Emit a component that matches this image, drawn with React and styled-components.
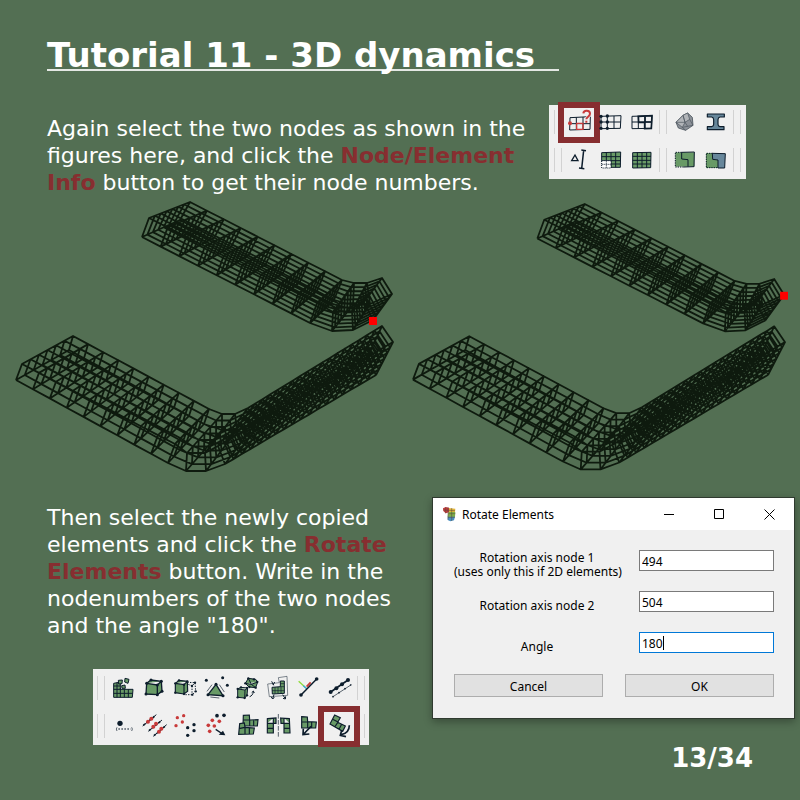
import React from "react";
import styled, { createGlobalStyle, css } from "styled-components";

const GlobalStyle = createGlobalStyle`
  *, *::before, *::after { box-sizing: border-box; }
  body { margin: 0; background: #536f53; }
  h1, p { margin: 0; }
`;

const Page = styled.main`
  display: flex;
  flex-direction: column;
  min-height: 100vh;
  padding-top: 39px;
  background: #536f53;
  color: #ffffff;
  font-family: "DejaVu Sans", sans-serif;
`;

const Title = styled.h1`
  align-self: flex-start;
  margin-left: 47px;
  padding-right: 24px;
  font-size: 34px;
  line-height: 32px;
  font-weight: bold;
  white-space: nowrap;
  background: linear-gradient(#e4e8e4, #e4e8e4) left bottom / 100% 2px no-repeat;
`;

const Intro = styled.section`
  display: flex;
  align-items: flex-start;
  justify-content: space-between;
  padding: 34px 54px 0 47px;
`;

const Text = styled.p`
  max-width: ${(p) => p.$width}px;
  padding-top: ${(p) => p.$top}px;
  font-size: 22px;
  line-height: 27px;
`;

const Accent = styled.strong`
  color: #872e30;
`;

const Figures = styled.section`
  display: flex;
  align-items: center;
  gap: 15px;
  padding: 4px 12px 0 14px;
`;

const Figure = styled.svg`
  flex: ${(p) => p.$grow} 1 0;
  min-width: 0;
  display: block;
  overflow: visible;
`;

const Lower = styled.section`
  display: flex;
  align-items: flex-start;
  justify-content: space-between;
  padding: 23px 5px 0 47px;
`;

const Column = styled.div`
  display: flex;
  flex-direction: column;
  align-items: center;
  gap: 30px;
`;

const Side = styled.div`
  display: flex;
  flex-direction: column;
  width: 363px;
`;

const PageNumber = styled.p`
  align-self: flex-end;
  margin-top: 24px;
  padding-right: 42px;
  font-size: 26px;
  line-height: 30px;
  font-weight: bold;
`;

/* ---------- toolbars ---------- */

const Toolbar = styled.div`
  display: flex;
  flex-direction: column;
  gap: 4px;
  flex: none;
  padding: ${(p) => (p.$compact ? "0 5px 2px" : "2px 4px")};
  background: #f0f0f0;
`;

const ToolRow = styled.div`
  display: flex;
  align-items: center;
  gap: 2px;
  height: 34px;
`;

const Grip = styled.span`
  width: 8px;
  height: 24px;
  border: solid #d2d2d2;
  border-width: 0 1px;
`;

const ToolGroup = styled.div`
  display: flex;
`;

const ToolButton = styled.button`
  position: relative;
  display: grid;
  place-items: center;
  width: 31px;
  height: 34px;
  padding: 0;
  border: 0;
  background: none;
  ${(p) =>
    p.$marked &&
    css`
      &::after {
        content: "";
        position: absolute;
        inset: -3px -5px -4px -6px;
        border: 6px solid #872e30;
      }
    `}
`;

const Glyph = styled.svg`
  display: block;
  width: 24px;
  height: 24px;
  overflow: visible;
`;

const NAVY = "#0d1d2c";
const GREEN = "#689a66";
const RED = "#c83a3a";
const BLUE = "#67879b";

function Dots({ at, r = 5, fill = NAVY }) {
  return at.map(([x, y]) => <circle key={`${x}-${y}`} cx={x} cy={y} r={r} fill={fill} />);
}

const line = { fill: "none", stroke: NAVY, strokeWidth: 3 };

const icons = {
  info: (
    <>
      <path {...line} d="M6 23 67 20 66 58 5 60ZM25 22V59M45 21V58M6 41H66" />
      <path fill="none" stroke={RED} strokeWidth="4" d="M26 40H45V58H26Z" />
      <circle cx="6" cy="40" r="6" fill={RED} />
      <path fill="none" stroke="#f0f0f0" strokeWidth="10" d="M46 10C47 -1 66 0 66 11 66 20 55 20 55 29" />
      <path fill="none" stroke={RED} strokeWidth="6" d="M46 10C47 -1 66 0 66 11 66 20 55 20 55 28M55 32V38" />
    </>
  ),
  nodes: (
    <>
      <path {...line} d="M6 19 66 17 64 55 6 56ZM25 18V56M45 18V56M6 36H65" />
      <Dots at={[[6, 19], [25, 18], [6, 36], [25, 36], [6, 55], [25, 55]]} r={5} />
    </>
  ),
  elements: (
    <>
      <path {...line} d="M6 19 66 17 64 55 6 56ZM25 18V56M45 18V56M6 36H65" />
      <path {...line} strokeWidth="5" d="M25 19 66 17 64 55 44 56V37H26ZM45 18V36H65" />
    </>
  ),
  rock: (
    <>
      <path fill="#8d9299" stroke="#4b545d" strokeWidth="2.5" strokeLinejoin="round" d="M30 16 44 9 58 22 60 46 38 61 16 54 9 37Z" />
      <path fill="#b2b5b9" stroke="#4b545d" strokeWidth="2" d="M30 16 36 37 9 37ZM44 9 50 28 36 37 30 16ZM36 37 28 52 9 37" />
      <path fill="none" stroke="#4b545d" strokeWidth="2" d="M50 28 60 46 28 52 38 61M36 37 44 49" />
    </>
  ),
  beam: (
    <path fill={BLUE} stroke={NAVY} strokeWidth="3.5" strokeLinejoin="round" d="M10 12H61V21H48Q42 22 42 29V43Q42 49 48 50H60V59H10V50H23Q29 49 29 43V29Q29 22 23 21H10Z" />
  ),
  delta: (
    <>
      <path {...line} strokeWidth="4" d="M21 21 11 38H30Z" />
      <path {...line} strokeWidth="4.5" d="M47 7 41 62M40 6 54 8M33 60 49 62" />
    </>
  ),
  partMesh: (
    <>
      <path fill={GREEN} stroke={NAVY} strokeWidth="3" d="M8 14 65 12 64 58H36V38H8Z" />
      <path {...line} d="M8 26H65M22 13V38M36 13V38M50 12V58M8 38H65M36 48H64" />
      <path fill="#ffffff" stroke={NAVY} strokeWidth="3" strokeDasharray="3 3" d="M8 38H36V60H8ZM22 38V60M8 49H36" />
    </>
  ),
  fullMesh: (
    <>
      <path fill={GREEN} stroke={NAVY} strokeWidth="3" d="M8 14 63 13 62 59 8 60Z" />
      <path {...line} d="M8 25H63M8 37H63M8 48H63M22 13V60M36 13V60M50 13V60" />
    </>
  ),
  regionA: (
    <>
      <path fill={GREEN} d="M7 13H64V56H7Z" />
      <path {...line} d="M26 13 64 12 63 56 31 57M26 13V33L45 35V56" />
      <path {...line} strokeDasharray="4 3" d="M26 13H7V57H31" />
    </>
  ),
  regionB: (
    <>
      <path fill={GREEN} d="M6 15H26V34H42V60H6Z" />
      <path fill={BLUE} stroke={NAVY} strokeWidth="3" d="M25 16 64 17 62 60H42V36L26 34Z" />
      <path {...line} strokeDasharray="4 3" d="M26 16H7V59H42" />
    </>
  ),
  build: (
    <>
      <path fill={GREEN} stroke={NAVY} strokeWidth="3" d="M8 22 28 18V40H66L64 64H8Z" />
      <path {...line} d="M8 40H28M8 52H65M18 20V64M28 36V64M40 40V64M52 40V64M8 30H28" />
      <path fill={GREEN} stroke={NAVY} strokeWidth="3" d="M22 13 34 12 33 23 23 24ZM42 7 54 10 51 22 41 18ZM32 29 42 27 43 37 33 37Z" />
    </>
  ),
  cube: (
    <>
      <path fill={GREEN} stroke={NAVY} strokeWidth="4" d="M14 22 27 12 58 16 60 46 46 56 12 54ZM14 22 46 27 58 16M46 27V56" />
      <Dots at={[[14, 22], [27, 12], [58, 16], [60, 46], [46, 56], [12, 54], [46, 27]]} r={4.5} />
    </>
  ),
  cubeCopy: (
    <>
      <path fill={GREEN} stroke={NAVY} strokeWidth="3.5" d="M7 22 18 13 43 16 44 46 33 54 7 50ZM7 22 33 26 43 16M33 26V54" />
      <path {...line} strokeDasharray="4 4" d="M43 19 66 20 68 46 58 56H36M46 25 57 30 66 20M57 30V56" />
      <Dots at={[[7, 22], [18, 13], [43, 16], [33, 54], [7, 50], [33, 26], [66, 20], [68, 46], [58, 56], [57, 30]]} r={3.5} />
    </>
  ),
  triangle: (
    <>
      <path fill={GREEN} stroke={NAVY} strokeWidth="4" d="M36 25 57 59 12 56Z" />
      <path {...line} strokeWidth="2" d="M24 26 9 46M46 26 61 48M19 63 46 66" />
      <Dots at={[[36, 25], [57, 59], [12, 56], [7, 13], [56, 5], [70, 28]]} r={4.5} />
    </>
  ),
  cubes: (
    <>
      <path fill={GREEN} stroke={NAVY} strokeWidth="3" d="M8 39 18 34 38 36 36 58 29 66 8 64ZM8 39 30 42 38 36M30 42 29 66" />
      <path fill={GREEN} stroke={NAVY} strokeWidth="3" d="M40 7 62 10 68 18 62 35 42 33 31 22ZM31 22 49 25 68 18M49 25 62 35M40 7 49 25" />
      <Dots at={[[8, 39], [18, 34], [36, 36], [36, 58], [29, 66], [8, 64], [40, 7], [57, 10], [67, 18], [62, 35], [43, 33], [31, 22]]} r={3.5} />
      <path {...line} d="M44 62C50 60 54 55 55 47M50 50 55 45 58 51" />
    </>
  ),
  stretch: (
    <>
      <path fill={GREEN} stroke={NAVY} strokeWidth="3" d="M18 34 43 32V15H55V52L19 54Z" />
      <path {...line} strokeWidth="2" d="M18 44H55M43 32H55M43 23H55M27 34V53M36 33V53M45 32V53" />
      <path {...line} strokeWidth="1.5" d="M5 24 40 20 37 5 63 1 65 58 10 62Z" />
      <path {...line} d="M17 16 23 28M26 18 21 27M24 56 20 68M15 62 20 69 25 64M50 56 58 68M51 67 58 69 59 61" />
    </>
  ),
  axes: (
    <>
      <path fill="none" stroke="#8edb3a" strokeWidth="4" d="M5 16 27 36" />
      <path fill="none" stroke="#39a9e0" strokeWidth="4" d="M19 29 29 38" />
      <path fill="none" stroke={RED} strokeWidth="6" d="M29 32 41 19" />
      <path {...line} strokeWidth="4.5" d="M12 57 59 9" />
      <Dots at={[[12, 57], [59, 9]]} r={5.5} />
    </>
  ),
  rod: (
    <>
      <path {...line} strokeWidth="5" d="M8 48 60 12" />
      <Dots at={[[8, 48], [25, 37], [42, 25], [60, 12]]} r={6} />
      <path {...line} strokeWidth="2" d="M15 62 70 26" />
      <Dots at={[[15, 62], [33, 50], [51, 38], [68, 27]]} r={2.5} />
    </>
  ),
  point: (
    <>
      <circle cx="27" cy="28" r="8" fill={NAVY} />
      <path {...line} strokeWidth="2" d="M18 40Q14 45 18 51M62 40Q66 45 62 51" />
      <path {...line} strokeWidth="3" strokeDasharray="5 4" d="M22 45H59" />
    </>
  ),
  rods: (
    <>
      <path {...line} strokeWidth="3" d="M2 36 43 2M19 52 60 18M34 67 74 32" />
      <path {...line} strokeWidth="5" strokeDasharray="7 5" d="M4 34 41 4M21 50 58 20M36 65 72 34" />
      <Dots at={[[18, 23], [28, 14], [34, 38], [42, 29], [51, 53], [58, 44]]} r={6} fill={RED} />
    </>
  ),
  dotsRed: (
    <>
      <Dots at={[[13, 11], [32, 5], [28, 24], [9, 35]]} r={5} fill={RED} />
      <Dots at={[[44, 41], [63, 32], [63, 50], [44, 64]]} r={5} />
    </>
  ),
  dotsArrow: (
    <>
      <Dots at={[[25, 19], [46, 22], [13, 34], [31, 36], [17, 52]]} r={5.5} fill={RED} />
      <Dots at={[[39, 5], [60, 4]]} r={5.5} />
      <path {...line} strokeWidth="4" d="M35 46 56 60" />
      <path fill={NAVY} d="M64 64 44 62 57 50Z" />
    </>
  ),
  stack: (
    <>
      <path fill={GREEN} stroke={NAVY} strokeWidth="3.5" d="M25 4 43 3 44 18 69 17 67 36H24ZM26 18H44V36M56 18V36" />
      <path fill={GREEN} stroke={NAVY} strokeWidth="3.5" d="M14 29 28 27 30 40 58 42 55 60 11 61ZM12 44 30 40V60M43 41V60" />
    </>
  ),
  mirror: (
    <>
      <path fill={GREEN} stroke={NAVY} strokeWidth="3.5" d="M4 14 30 12V28H22V57H4ZM4 28H22V12M4 43H22" />
      <path fill={GREEN} stroke={NAVY} strokeWidth="3.5" d="M44 12 70 14 72 57H54V28H45ZM54 12V28H71M54 43H71" />
      <path {...line} strokeWidth="2" strokeDasharray="14 4" d="M37 0V68" />
    </>
  ),
  move: (
    <>
      <path fill={GREEN} stroke={NAVY} strokeWidth="3.5" d="M14 8 31 9 32 23 58 24 56 42H14ZM14 24H32V42M44 24V42" />
      <path {...line} strokeWidth="5" d="M42 37 20 60M19 44 18 62 37 60" />
    </>
  ),
  rotate: (
    <>
      <path fill={GREEN} stroke={NAVY} strokeWidth="3.5" d="M20 3 37 11 29 25 52 36 44 52 6 30ZM14 16 30 24 21 38M41 31 33 46" />
      <path {...line} strokeWidth="5" d="M64 34C64 49 55 59 40 62M41 49 37 64 54 68" />
    </>
  ),
};

function Tool({ name, label, marked }) {
  return (
    <ToolButton type="button" aria-label={label} $marked={marked}>
      <Glyph viewBox="0 0 72 72" aria-hidden="true">
        {icons[name]}
      </Glyph>
    </ToolButton>
  );
}

function Tools({ items, marked }) {
  return (
    <ToolGroup>
      {items.map(([name, label]) => (
        <Tool key={name} name={name} label={label} marked={name === marked} />
      ))}
    </ToolGroup>
  );
}

const infoRows = [
  [
    [["info", "Node/Element Info"], ["nodes", "Select nodes"], ["elements", "Select elements"]],
    [["rock", "Material"], ["beam", "Section"]],
  ],
  [
    [["delta", "Measure"], ["partMesh", "Show part"], ["fullMesh", "Show all"]],
    [["regionA", "Element set"], ["regionB", "Assign section"]],
  ],
];

const editRows = [
  [
    ["build", "Create mesh"], ["cube", "Create element"], ["cubeCopy", "Extrude elements"], ["triangle", "Create triangle"],
    ["cubes", "Convert elements"], ["stretch", "Scale elements"], ["axes", "Orientation"], ["rod", "Beam elements"],
  ],
  [
    ["point", "Create node"], ["rods", "Fuse nodes"], ["dotsRed", "Copy nodes"], ["dotsArrow", "Move nodes"],
    ["stack", "Copy elements"], ["mirror", "Mirror elements"], ["move", "Move elements"], ["rotate", "Rotate Elements"],
  ],
];

/* ---------- wireframe solids ---------- */

const mix = (a, b, t) => [a[0] + (b[0] - a[0]) * t, a[1] + (b[1] - a[1]) * t];

// Expands corner points into evenly spaced stations; counts[i] cells lie between corner i and i + 1.
function stations(corners, counts) {
  const out = [corners[0]];
  counts.forEach((n, i) => {
    for (let k = 1; k <= n; k += 1) out.push(mix(corners[i], corners[i + 1], k / n));
  });
  return out;
}

function wirePath({ counts, across, lowFront, lowBack, highFront, highBack }) {
  const [a, b, c, d] = [lowFront, lowBack, highBack, highFront].map((p) => stations(p, counts));
  const toPath = (pts) => "M" + pts.map(([x, y]) => `${x.toFixed(1)} ${y.toFixed(1)}`).join("L");
  const parts = [];
  for (let j = 0; j <= across; j += 1) {
    const t = j / across;
    parts.push(toPath(a.map((p, i) => mix(p, d[i], t))));
    parts.push(toPath(b.map((p, i) => mix(p, c[i], t))));
  }
  a.forEach((p, i) => {
    parts.push(toPath([p, b[i], c[i], d[i], p]));
    for (let j = 1; j < across; j += 1) {
      const t = j / across;
      parts.push(toPath([mix(p, d[i], t), mix(b[i], c[i], t)]));
    }
  });
  return parts.join("");
}

const longArm = wirePath({
  counts: [9, 1, 1, 1, 18],
  across: 6,
  lowFront: [[16, 380], [168, 463], [186, 471], [206, 471], [225, 464], [376, 375]],
  lowBack: [[22, 364], [175, 444], [187, 453], [205, 453], [218, 446], [367, 358]],
  highBack: [[73, 336], [209, 409], [222, 414], [235, 414], [248, 408], [382, 326]],
  highFront: [[69, 350], [204, 424], [222, 430], [237, 430], [257, 422], [393, 342]],
});

const shortArm = wirePath({
  counts: [9, 1, 1, 1],
  across: 7,
  lowFront: [[142, 237], [310, 323], [332, 331], [353, 330], [373, 320]],
  lowBack: [[149, 218], [317, 303], [333, 312], [352, 311], [364, 302]],
  highBack: [[190, 202], [342, 280], [354, 283], [367, 283], [382, 278]],
  highFront: [[180, 220], [334, 300], [353, 305], [370, 304], [392, 294]],
});

function Solid({ grow, node, label }) {
  return (
    <Figure $grow={grow} viewBox="14 200 382 274" role="img" aria-label={label}>
      <path d={shortArm + longArm} fill="none" stroke="#0e1a0e" strokeWidth="1.8" strokeLinejoin="round" />
      <rect x={node[0] - 4} y={node[1] - 4} width="8" height="8" fill="#ff0000" />
    </Figure>
  );
}

/* ---------- dialog ---------- */

const Dialog = styled.form`
  border: 1px solid #2f3a2f;
  background: #f0f0f0;
  color: #000000;
  font-family: "Noto Sans", sans-serif;
  font-size: 12px;
  box-shadow: 0 3px 8px rgba(0, 0, 0, 0.3);
`;

const TitleBar = styled.header`
  display: flex;
  align-items: center;
  height: 32px;
  padding-left: 10px;
  background: #ffffff;
`;

const AppIcon = styled.svg`
  width: 13px;
  height: 15px;
`;

const Caption = styled.span`
  flex: 1;
  padding-left: 6px;
`;

const WindowButton = styled.button`
  display: grid;
  place-items: center;
  width: 50px;
  height: 32px;
  padding: 0;
  border: 0;
  background: none;
`;

const DialogBody = styled.div`
  display: flex;
  flex-direction: column;
  padding: 20px 20px 21px 21px;
`;

const Field = styled.div`
  display: flex;
  justify-content: space-between;
  height: 41px;
`;

const FieldLabel = styled.label`
  width: 166px;
  padding-top: ${(p) => (p.$tall ? 1 : 8)}px;
  line-height: 14px;
  text-align: center;
  white-space: nowrap;
`;

const InputWrap = styled.div`
  position: relative;
  width: 135px;
`;

const Input = styled.input`
  display: block;
  width: 100%;
  height: 21px;
  padding: 2px 2px 0;
  border: 1px solid ${(p) => (p.$active ? "#0078d7" : "#7a7a7a")};
  border-radius: 0;
  background: #ffffff;
  color: #000000;
  font: inherit;
  outline: none;
`;

const Caret = styled.span`
  position: absolute;
  left: 24px;
  top: 4px;
  width: 1px;
  height: 14px;
  background: #000000;
`;

const Actions = styled.div`
  display: flex;
  gap: 22px;
  padding-top: 1px;
`;

const Action = styled.button`
  flex: 1;
  height: 23px;
  padding: 1px 0 0;
  border: 1px solid #adadad;
  background: #e1e1e1;
  color: #000000;
  font: inherit;
`;

function RotateDialog() {
  const stroke = { fill: "none", stroke: "#000000", strokeWidth: 1 };
  const submit = (e) => e.preventDefault();
  return (
    <Dialog onSubmit={submit} aria-label="Rotate Elements">
      <TitleBar>
        <AppIcon viewBox="0 0 39 45" aria-hidden="true">
          <path fill="#e0b43c" d="M15 3 37 5 36 16H15Z" />
          <path fill="#7fae4a" d="M16 15H37L36 30H14Z" />
          <path fill="#4a8fc0" d="M14 29H36L33 40 22 43 14 39Z" />
          <path fill="#bf3b3d" d="M0 4 8 0 18 2V16L8 19 1 12Z" />
          <path fill="none" stroke="#56483c" strokeWidth="1.5" d="M1 9 36 11M15 1V38M26 3V42M16 20H37M15 31H36M8 1V19" />
        </AppIcon>
        <Caption>Rotate Elements</Caption>
        <WindowButton type="button" aria-label="Minimize">
          <svg width="10" height="11"><path {...stroke} d="M0 5.5H10" /></svg>
        </WindowButton>
        <WindowButton type="button" aria-label="Maximize">
          <svg width="10" height="10"><path {...stroke} d="M.5 .5H9.5V9.5H.5Z" /></svg>
        </WindowButton>
        <WindowButton type="button" aria-label="Close">
          <svg width="11" height="11"><path {...stroke} d="M.5 .5 10.5 10.5M10.5 .5 .5 10.5" /></svg>
        </WindowButton>
      </TitleBar>
      <DialogBody>
        <Field>
          <FieldLabel htmlFor="node1" $tall>
            Rotation axis node 1<br />(uses only this if 2D elements)
          </FieldLabel>
          <InputWrap><Input id="node1" defaultValue="494" /></InputWrap>
        </Field>
        <Field>
          <FieldLabel htmlFor="node2">Rotation axis node 2</FieldLabel>
          <InputWrap><Input id="node2" defaultValue="504" /></InputWrap>
        </Field>
        <Field>
          <FieldLabel htmlFor="angle">Angle</FieldLabel>
          <InputWrap>
            <Input id="angle" defaultValue="180" $active />
            <Caret />
          </InputWrap>
        </Field>
        <Actions>
          <Action type="button">Cancel</Action>
          <Action type="submit">OK</Action>
        </Actions>
      </DialogBody>
    </Dialog>
  );
}

export default function App() {
  return (
    <>
      <GlobalStyle />
      <Page>
        <Title>Tutorial 11 - 3D dynamics</Title>
        <Intro>
          <Text $width={490} $top={10}>
            Again select the two nodes as shown in the figures here, and click the{" "}
            <Accent>Node/Element Info</Accent> button to get their node numbers.
          </Text>
          <Toolbar $compact>
            {infoRows.map(([first, second]) => (
              <ToolRow key={first[0][0]}>
                <Grip />
                <Tools items={first} marked="info" />
                <Grip />
                <Tools items={second} />
                <Grip />
              </ToolRow>
            ))}
          </Toolbar>
        </Intro>
        <Figures>
          <Solid grow={382} node={[373, 321]} label="Bent solids with the lower end node selected" />
          <Solid grow={377} node={[392, 295]} label="Bent solids with the outer end node selected" />
        </Figures>
        <Lower>
          <Column>
            <Text $width={368} $top={7}>
              Then select the newly copied elements and click the <Accent>Rotate Elements</Accent> button.
              Write in the nodenumbers of the two nodes and the angle "180".
            </Text>
            <Toolbar>
              {editRows.map((items) => (
                <ToolRow key={items[0][0]}>
                  <Grip />
                  <Tools items={items} marked="rotate" />
                  <Grip />
                </ToolRow>
              ))}
            </Toolbar>
          </Column>
          <Side>
            <RotateDialog />
            <PageNumber>13/34</PageNumber>
          </Side>
        </Lower>
      </Page>
    </>
  );
}
